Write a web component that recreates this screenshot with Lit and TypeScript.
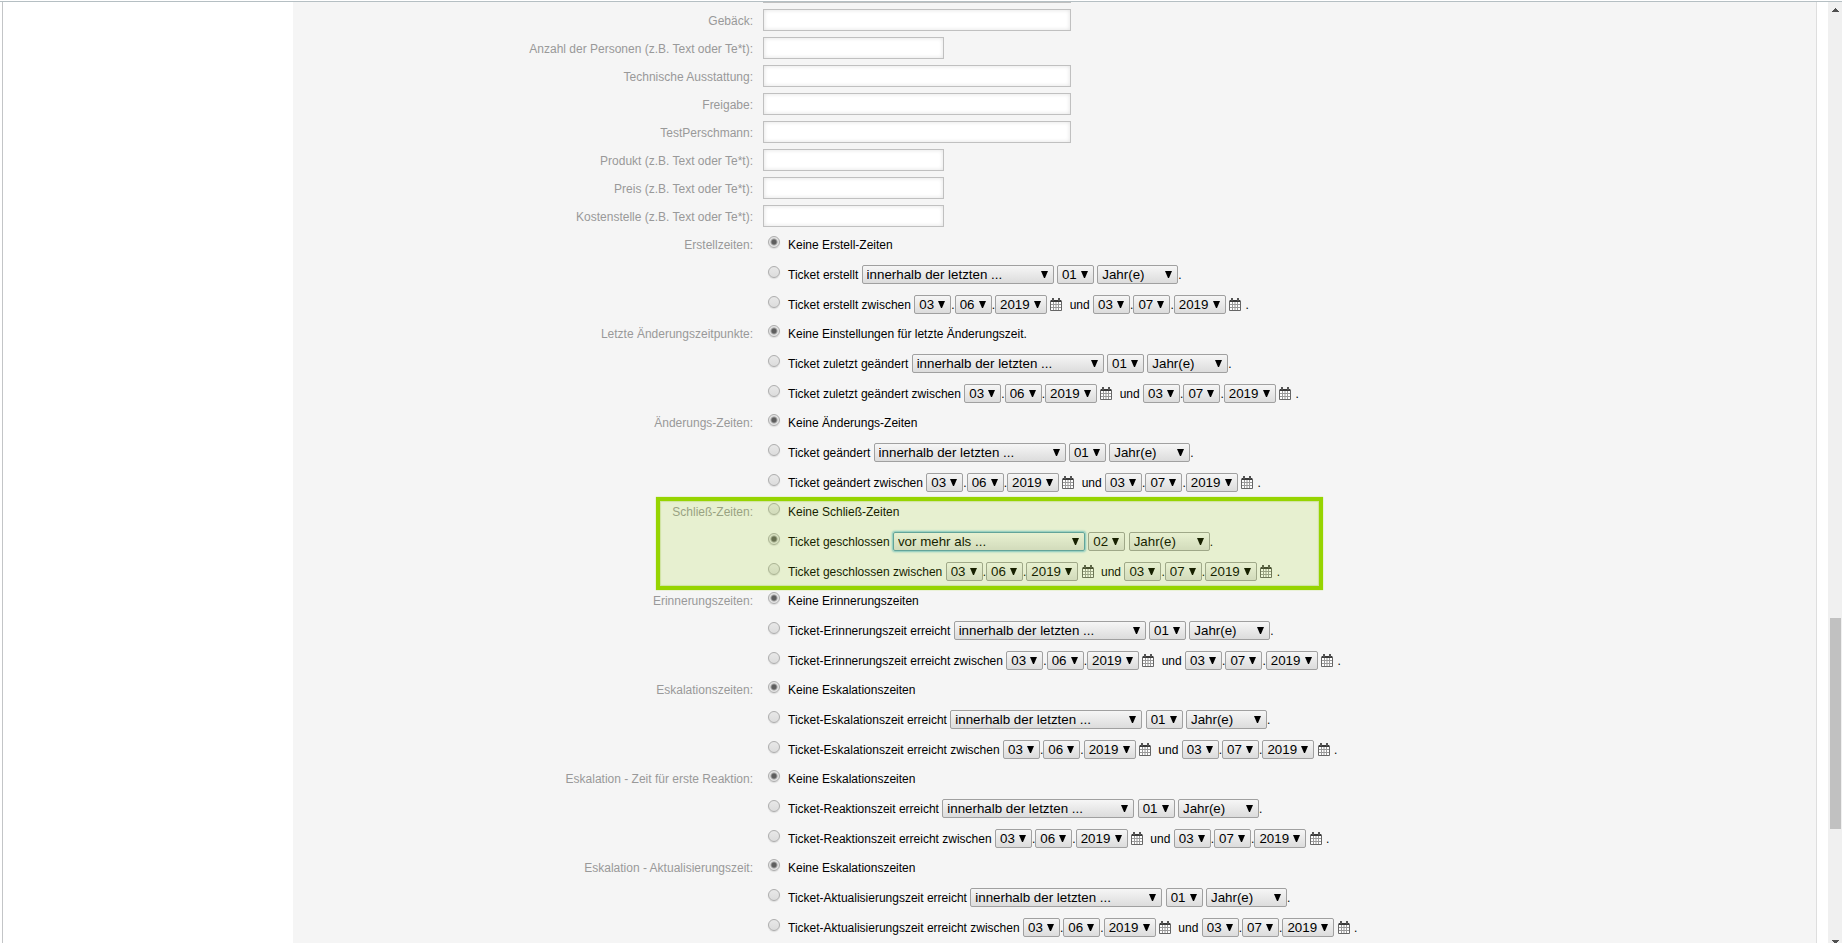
import { LitElement, html, css, svg, nothing } from "lit";
import { customElement, property } from "lit/decorators.js";
import { classMap } from "lit/directives/class-map.js";

interface TextField {
  label: string;
  size: "wide" | "narrow";
}

interface TimeGroup {
  id: string;
  label: string;
  none: string;
  text: string;
  selected: "none" | "point";
  point: string;
  count: string;
  marked?: boolean;
}

const FIELDS: TextField[] = [
  { label: "", size: "wide" },
  { label: "Gebäck:", size: "wide" },
  { label: "Anzahl der Personen (z.B. Text oder Te*t):", size: "narrow" },
  { label: "Technische Ausstattung:", size: "wide" },
  { label: "Freigabe:", size: "wide" },
  { label: "TestPerschmann:", size: "wide" },
  { label: "Produkt (z.B. Text oder Te*t):", size: "narrow" },
  { label: "Preis (z.B. Text oder Te*t):", size: "narrow" },
  { label: "Kostenstelle (z.B. Text oder Te*t):", size: "narrow" },
];

const WITHIN = "innerhalb der letzten ...";
const BEFORE = "vor mehr als ...";

const group = (id: string, label: string, none: string, text: string): TimeGroup => ({
  id, label, none, text, selected: "none", point: WITHIN, count: "01",
});

const GROUPS: TimeGroup[] = [
  group("create", "Erstellzeiten:", "Keine Erstell-Zeiten", "Ticket erstellt"),
  group("last", "Letzte Änderungszeitpunkte:", "Keine Einstellungen für letzte Änderungszeit.", "Ticket zuletzt geändert"),
  group("change", "Änderungs-Zeiten:", "Keine Änderungs-Zeiten", "Ticket geändert"),
  {
    ...group("close", "Schließ-Zeiten:", "Keine Schließ-Zeiten", "Ticket geschlossen"),
    selected: "point", point: BEFORE, count: "02", marked: true,
  },
  group("pending", "Erinnerungszeiten:", "Keine Erinnerungszeiten", "Ticket-Erinnerungszeit erreicht"),
  group("escalation", "Eskalationszeiten:", "Keine Eskalationszeiten", "Ticket-Eskalationszeit erreicht"),
  group("response", "Eskalation - Zeit für erste Reaktion:", "Keine Eskalationszeiten", "Ticket-Reaktionszeit erreicht"),
  group("update", "Eskalation - Aktualisierungszeit:", "Keine Eskalationszeiten", "Ticket-Aktualisierungszeit erreicht"),
];

const calendar = svg`
  <path fill="#fff" d="M1 4h10v8H1z"/>
  <path fill="none" stroke="#999" d="M3.5 4v8M6 4v8M8.500 4v8M1 6.500h10M1 9.500h10"/>
  <path fill="none" stroke="#666" d="M.5 2.500v10h11v-10"/>
  <path fill="#3a3a3a" d="M1 2h10v2H1z"/>
  <path fill="#555" d="M2 0h2v3H2zM8 0h2v3H8z"/>`;

const formColumns = css`
  .row {
    display: grid;
    grid-template-columns: minmax(0, 460fr) minmax(0, 1053fr);
    column-gap: 10px;
  }
  .caption {
    color: #999;
    text-align: right;
    white-space: nowrap;
  }
`;

@customElement("time-group")
class TimeGroupElement extends LitElement {
  @property({ attribute: false }) data!: TimeGroup;

  static styles = [
    formColumns,
    css`
      :host {
        display: block;
        font: 12px/29px "Liberation Sans", Arial, sans-serif;
        color: #000;
      }
      .fields {
        position: relative;
      }
      .line {
        height: 30px;
        line-height: 30px;
        white-space: nowrap;
        padding-left: 5px;
      }
      .line.first {
        height: 29px;
        line-height: 29px;
      }
      .radio {
        appearance: none;
        box-sizing: border-box;
        width: 12px;
        height: 12px;
        margin: 0 8px 0 0;
        border: 1px solid #adadad;
        border-radius: 50%;
        vertical-align: 1px;
        background: linear-gradient(#e8e8e8, #dcdcdc);
        box-shadow: 0 1px 1px #dcdcdc;
      }
      .radio:checked {
        background: radial-gradient(circle, #5e5e5e 0 2px, #e4e4e4 4px);
      }
      .select {
        appearance: none;
        box-sizing: border-box;
        height: 19px;
        margin: 0;
        padding: 0 0 0 4px;
        border: 1px solid #a0a0a0;
        border-radius: 2px;
        color: #000;
        font-family: "Liberation Sans", Arial, sans-serif;
        background:
          url("data:image/svg+xml,%3Csvg xmlns='http://www.w3.org/2000/svg' width='7' height='7'%3E%3Cpath d='M0 0h7L4 7H3z'/%3E%3C/svg%3E") right 5px top 5px / 7px 7px no-repeat,
          linear-gradient(#f6f6f6, #dcdcdc);
      }
      .point { width: 192px; }
      .two { width: 37px; }
      .four { width: 52px; }
      .unit { width: 81px; }
      .focused {
        border-color: #5a9cb4;
        box-shadow: 0 0 2px 1px #7cc4dc;
      }
      .picker {
        display: inline-block;
        width: 12px;
        height: 13px;
        margin: 0;
        padding: 0;
        border: 0;
        background: none;
        vertical-align: -2px;
      }
      .glyph {
        display: block;
        width: 12px;
        height: 13px;
      }
      .and {
        padding-left: 4px;
      }
      .end {
        padding-left: 1px;
      }
      .marker {
        position: absolute;
        z-index: 1;
        top: -1px;
        left: -107px;
        width: 667px;
        height: 93px;
        box-sizing: border-box;
        border: 4px solid #96d400;
        background: rgba(155, 214, 0, 0.15);
        box-shadow: 0 0 1px #b4e04a, inset 0 0 1px 1px #cfe3a0;
        pointer-events: none;
      }
    `,
  ];

  private select(kind: string, value: string, name: string, focused = false) {
    return html`<select class=${classMap({ select: true, [kind]: true, focused })} aria-label=${name}><option>${value}</option></select>`;
  }

  private date(day: string, month: string, year: string, name: string) {
    return html`${this.select("two", day, `${name}: Tag`)}.${this.select("two", month, `${name}: Monat`)}.${this.select("four", year, `${name}: Jahr`)}
      <button class="picker" type="button" aria-label="Datum wählen"><svg class="glyph" viewBox="0 0 12 13">${calendar}</svg></button>`;
  }

  private radio(value: string, checked: boolean) {
    const { id } = this.data;
    return html`<input class="radio" type="radio" id="${id}-${value}" name=${id} .checked=${checked}>`;
  }

  render() {
    const { id, label, none, text, selected, point, count, marked } = this.data;
    return html`
      <div class="row" role="radiogroup" aria-labelledby="${id}-caption">
        <span class="caption" id="${id}-caption">${label}</span>
        <div class="fields">
          <div class="line first">${this.radio("none", selected === "none")}<label for="${id}-none">${none}</label></div>
          <div class="line">${this.radio("point", selected === "point")}<label for="${id}-point">${text}</label>
            ${this.select("point", point, "Zeitraum", marked)}
            ${this.select("two", count, "Anzahl")}
            ${this.select("unit", "Jahr(e)", "Einheit")}.</div>
          <div class="line">${this.radio("range", false)}<label for="${id}-range">${text} zwischen</label>
            ${this.date("03", "06", "2019", "Von")}
            <span class="and">und</span>
            ${this.date("03", "07", "2019", "Bis")} <span class="end">.</span></div>
          ${marked ? html`<div class="marker"></div>` : nothing}
        </div>
      </div>`;
  }
}

@customElement("app-root")
class AppRoot extends LitElement {
  static styles = [
    formColumns,
    css`
      :host {
        display: flex;
        box-sizing: border-box;
        height: 100vh;
        padding-top: 1px;
        overflow: hidden;
        background: #fff;
        font: 12px/28px "Liberation Sans", Arial, sans-serif;
      }
      .window {
        flex: 1;
        display: flex;
        min-width: 0;
        border-top: 1px solid #b5bfc3;
      }
      .sidebar {
        flex: none;
        box-sizing: border-box;
        width: 291px;
        margin-left: 2px;
        border-left: 1px solid #c3c5c7;
      }
      .panel {
        flex: 1;
        min-width: 0;
        overflow: hidden;
        background: #f5f5f5;
        border-right: 1px solid #dedede;
      }
      .form {
        margin-top: -24px;
      }
      .texts {
        padding-bottom: 1px;
      }
      .caption {
        line-height: 30px;
        height: 28px;
      }
      .text {
        box-sizing: border-box;
        height: 22px;
        margin: 3px 0;
        padding: 0 4px;
        border: 1px solid #c0c0c0;
        background: #fff;
        box-shadow: inset 0 0 4px #e0e0e0;
        font: 12px "Liberation Sans", Arial, sans-serif;
      }
      .wide { width: 308px; }
      .narrow { width: 181px; }
      .scroll {
        flex: none;
        display: grid;
        grid-template-rows: 16px 600fr 211fr 105fr 9px;
        width: 14px;
        margin-left: 11px;
        overflow: hidden;
        background: #f0f0f0;
      }
      .thumb {
        grid-row: 3;
        margin: 0 1px 0 2px;
        background: #c1c1c1;
      }
      .arrow {
        width: 7px;
        height: 4px;
        margin: 6px 0 0 4px;
        fill: #505050;
      }
      .down {
        grid-row: 5;
      }
    `,
  ];

  render() {
    return html`
      <div class="window">
        <aside class="sidebar"></aside>
        <main class="panel">
          <form class="form">
            <div class="texts">
              ${FIELDS.map(({ label, size }, i) => html`
                <div class="row">
                  <label class="caption" for="field-${i}">${label}</label>
                  <input class="text ${size}" id="field-${i}" type="text">
                </div>`)}
            </div>
            ${GROUPS.map((g) => html`<time-group .data=${g}></time-group>`)}
          </form>
        </main>
        <div class="scroll" aria-hidden="true">
          <svg class="arrow" viewBox="0 0 7 4"><path d="M3 0h1v1h1v1h1v1h1v1H0V3h1V2h1V1h1z"/></svg>
          <div class="thumb"></div>
          <svg class="arrow down" viewBox="0 0 7 4"><path d="M0 0h7v1H6v1H5v1H4v1H3V3H2V2H1V1H0z"/></svg>
        </div>
      </div>`;
  }
}
